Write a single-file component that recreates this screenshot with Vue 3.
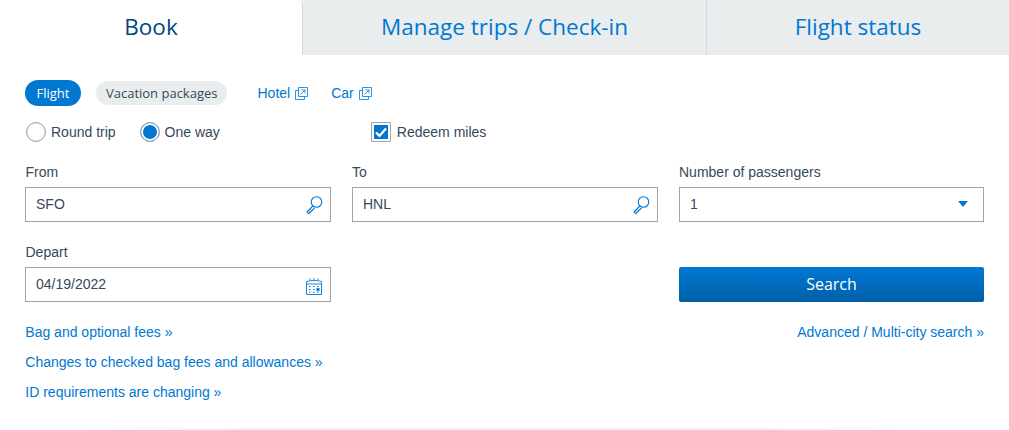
<template>
    <div class="page">
        <div class="tabs">
            <div v-for="tab in tabs" :key="tab" class="tab" :class="{ active: tab === 'Book' }">{{ tab }}</div>
        </div>

        <div class="panel">
            <div class="types">
                <span class="pill selected">Flight</span>
                <span class="pill">Vacation packages</span>
                <a class="ext hotel">Hotel
                    <svg width="13" height="13" viewBox="0 0 13 13" fill="none" stroke="#0078d2" stroke-width=".8">
                        <path d="M3.5 3.5H.5v9h9V9.500" />
                        <path d="M3.500.5h9v9h-9z" />
                        <path d="M5.500 7.500l4.500-4.500M6.500 3h3.500v3.500" />
                    </svg>
                </a>
                <a class="ext">Car
                    <svg width="13" height="13" viewBox="0 0 13 13" fill="none" stroke="#0078d2" stroke-width=".8">
                        <path d="M3.5 3.5H.5v9h9V9.500" />
                        <path d="M3.500.5h9v9h-9z" />
                        <path d="M5.500 7.500l4.500-4.500M6.500 3h3.500v3.500" />
                    </svg>
                </a>
            </div>

            <div class="options">
                <label class="radio first"><span class="dot"></span>Round trip</label>
                <label class="radio"><span class="dot on"></span>One way</label>
                <label class="check">
                    <span class="box">
                        <svg width="14" height="14" viewBox="0 0 14 14" fill="none" stroke="#fff" stroke-width="2.200">
                            <path d="M2 7.500l3.500 3.300L12 3.500" />
                        </svg>
                    </span>
                    Redeem miles
                </label>
            </div>

            <div class="fields">
                <div class="field">
                    <div class="label">From</div>
                    <div class="input">SFO
                        <svg class="icon" width="18" height="20" viewBox="0 0 18 20" fill="none" stroke="#0078d2">
                            <circle cx="11.500" cy="7" r="5.300" stroke-width="1.100" />
                            <path d="M7.800 11L2 17l1.800 1.800L9.500 13" stroke-width="1.100" />
                            <path d="M3.500 15.700l1.700 1.700M5 14.200l1.700 1.700" stroke-width=".7" />
                        </svg>
                    </div>
                </div>
                <div class="field">
                    <div class="label">To</div>
                    <div class="input">HNL
                        <svg class="icon" width="18" height="20" viewBox="0 0 18 20" fill="none" stroke="#0078d2">
                            <circle cx="11.500" cy="7" r="5.300" stroke-width="1.100" />
                            <path d="M7.800 11L2 17l1.800 1.800L9.500 13" stroke-width="1.100" />
                            <path d="M3.500 15.700l1.700 1.700M5 14.200l1.700 1.700" stroke-width=".7" />
                        </svg>
                    </div>
                </div>
                <div class="field">
                    <div class="label">Number of passengers</div>
                    <div class="input">1
                        <span class="caret"></span>
                    </div>
                </div>
                <div class="field">
                    <div class="label">Depart</div>
                    <div class="input">04/19/2022
                        <svg class="icon cal" width="16" height="18" viewBox="0 0 16 18" fill="none" stroke="#0078d2" stroke-width=".9">
                            <path d="M.5 4.500c5-1.300 10-1.300 15 0v13H.5z" />
                            <path d="M.5 7h15" />
                            <path d="M4 1.500v2M8 1v2M12 1.500v2" />
                            <path d="M3 9.500h1.500M7 9.500h1.500M11 9.500h1.500M3 12.500h1.500M7 12.500h1.500M3 15.300h1.500M7 15.300h1.500M11 15.300h1.500" stroke-width="1.100" />
                            <path d="M10.800 11.300h2.400v2.400h-2.400z" fill="#0078d2" stroke-width=".6" />
                        </svg>
                    </div>
                </div>
                <div class="field"></div>
                <div class="field search-cell">
                    <button class="search">Search</button>
                </div>
            </div>

            <div class="links">
                <div class="link-col">
                    <a v-for="link in links" :key="link">{{ link }} »</a>
                </div>
                <a>Advanced / Multi-city search »</a>
            </div>
        </div>
        <div class="shadow"></div>
    </div>
</template>

<script setup>
const tabs = ["Book", "Manage trips / Check-in", "Flight status"];
const links = [
    "Bag and optional fees",
    "Changes to checked bag fees and allowances",
    "ID requirements are changing",
];
</script>

<style>
body {
    margin: 0;
    background: #fff;
}
</style>

<style scoped>
.page {
    position: relative;
    width: 1009px;
    height: 430px;
    overflow: hidden;
    font-family: "Liberation Sans", Arial, sans-serif;
    font-size: 14px;
    color: #36495a;
}

.tabs {
    display: grid;
    grid-template-columns: 303px 404px 302px;
    height: 55px;
}

.tab {
    display: flex;
    align-items: center;
    justify-content: center;
    padding-bottom: 2px;
    box-sizing: border-box;
    background: #e9edee;
    border-right: 1px solid #d0dae0;
    font-family: "Open Sans", sans-serif;
    font-size: 22.500px;
    color: #0078d2;
}

.tab:last-child {
    border-right: 0;
}

.tab.active {
    background: #fff;
    color: #00467f;
    border-top-right-radius: 4px;
}

.panel {
    padding: 25px 25px 0;
}

.types {
    display: flex;
    align-items: center;
    height: 26px;
}

.pill {
    display: flex;
    align-items: center;
    height: 24px;
    padding: 0 10px;
    margin-right: 15px;
    border-radius: 12px;
    background: #e9edee;
    font-family: "Open Sans", sans-serif;
    font-size: 13px;
    color: #36495a;
}

.pill.selected {
    height: 26px;
    padding: 0 11.500px;
    border-radius: 13px;
    background: #0078d2;
    color: #fff;
}

a {
    color: #0078d2;
}

.ext {
    display: flex;
    align-items: center;
    gap: 5px;
    margin-left: 15px;
    margin-right: 8px;
}

.options {
    display: flex;
    align-items: center;
    height: 22px;
    margin-top: 15px;
}

.radio {
    display: flex;
    align-items: center;
    gap: 5px;
    margin-right: 24px;
}

.radio.first {
    margin-left: 1px;
}

.dot {
    width: 20px;
    height: 20px;
    box-sizing: border-box;
    border: 1px solid #9da6ab;
    border-radius: 50%;
    background: #fff;
    box-shadow: inset 0 0 0 1px #e1e6e9;
}

.dot.on {
    background: #0078d2;
    box-shadow: inset 0 0 0 2px #fff;
}

.check {
    display: flex;
    align-items: center;
    gap: 6px;
    margin-left: 127px;
}

.box {
    display: flex;
    align-items: center;
    justify-content: center;
    width: 20px;
    height: 20px;
    box-sizing: border-box;
    border: 1px solid #9da6ab;
    background: #0078d2;
    box-shadow: inset 0 0 0 2px #fff;
}

.fields {
    display: grid;
    grid-template-columns: 306px 306px 305px;
    column-gap: 21px;
    row-gap: 22px;
    margin-top: 21px;
}

.field {
    display: flex;
    flex-direction: column;
    height: 58px;
}

.label {
    height: 23px;
    line-height: 16px;
}

.field:nth-child(3n + 1) .label {
    padding-left: .500px;
}

.input {
    position: relative;
    display: flex;
    align-items: center;
    height: 35px;
    box-sizing: border-box;
    padding: 0 0 2px 10px;
    border: 1px solid #9da6ab;
    background: #fff;
}

.icon {
    position: absolute;
    right: 7.500px;
    top: 7px;
}

.icon.cal {
    right: 8px;
    top: 9px;
}

.caret {
    position: absolute;
    right: 15px;
    top: 13px;
    width: 0;
    height: 0;
    border-left: 5px solid transparent;
    border-right: 5px solid transparent;
    border-top: 6px solid #0078d2;
}

.search-cell {
    justify-content: flex-end;
}

.search {
    height: 35px;
    padding: 0 0 2px;
    border: 0;
    border-radius: 2px;
    background: linear-gradient(#0078d2, #0060a8);
    color: #fff;
    font-family: "Open Sans", sans-serif;
    font-size: 16px;
}

.links {
    display: flex;
    justify-content: space-between;
    align-items: flex-start;
    margin-top: 22px;
}

.link-col {
    display: flex;
    flex-direction: column;
    gap: 14px;
    padding-left: .300px;
}

.links a {
    line-height: 16px;
}

.shadow {
    position: absolute;
    left: 85px;
    right: 85px;
    bottom: 0;
    height: 2px;
    background: linear-gradient(90deg, #fff, #f0f1f2 20%, #f0f1f2 80%, #fff);
}
</style>
